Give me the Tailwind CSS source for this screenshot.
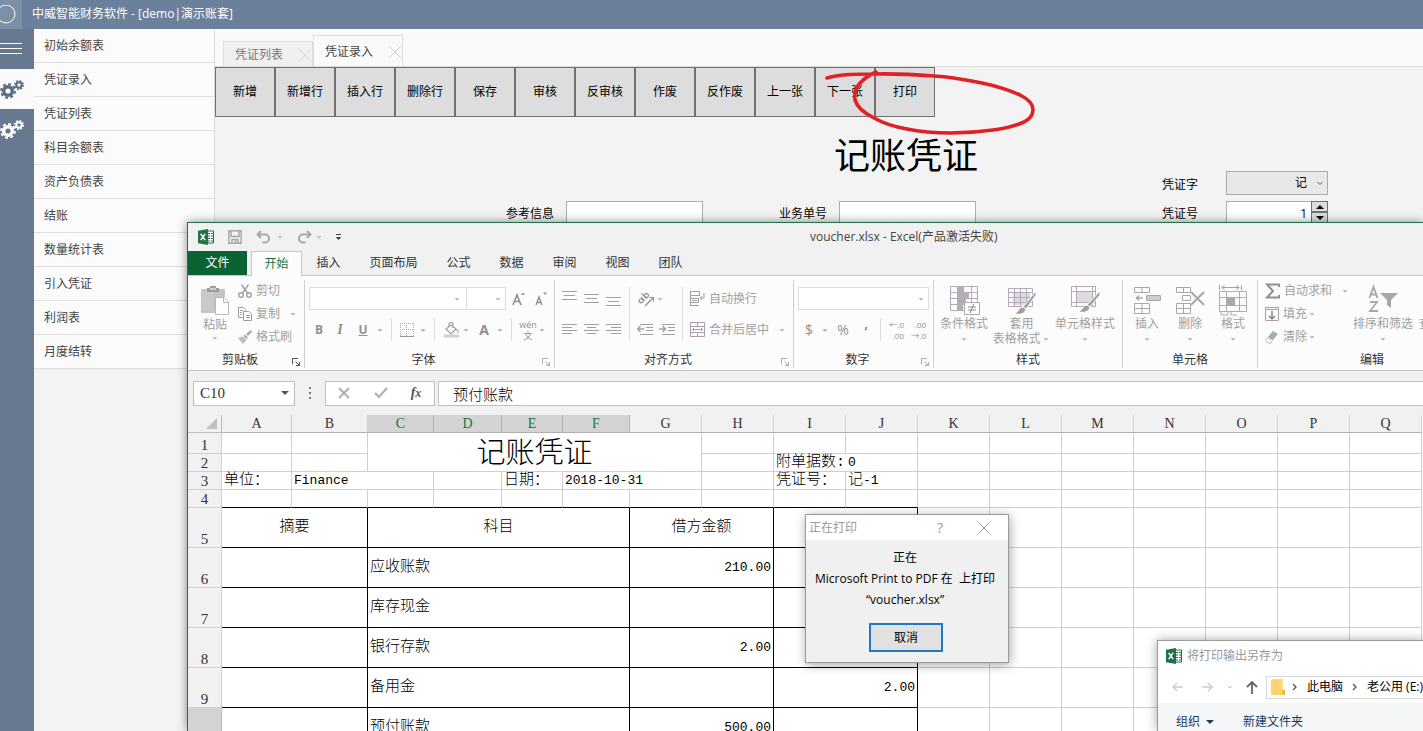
<!DOCTYPE html>
<html lang="zh-CN">
<head>
<meta charset="utf-8">
<title>中威智能财务软件</title>
<script src="https://cdn.jsdelivr.net/npm/@tailwindcss/browser@4"></script>
</head>
<body class="relative h-screen overflow-hidden bg-[#f3f3f3] font-['Open_Sans','Noto_Sans_CJK_SC',sans-serif] text-xs leading-4 text-black">

<svg class="hidden" aria-hidden="true">
  <symbol id="caret" viewBox="0 0 10 10"><path d="M2.500 4h5L5 7z" fill="currentColor" opacity=".65"/></symbol>
  <symbol id="launch" viewBox="0 0 9 9"><path d="M.5 7V.5H7M4 4l4 4M8.500 4.500v4h-4" fill="none" stroke="currentColor"/></symbol>
  <symbol id="gears" viewBox="0 0 26 22">
    <g fill="none" stroke="currentColor">
      <circle cx="8" cy="13" r="4.300" stroke-width="3.400"/>
      <circle cx="8" cy="13" r="6.800" stroke-width="2.200" stroke-dasharray="2.800 2.540"/>
      <circle cx="19" cy="7" r="2.700" stroke-width="2"/>
      <circle cx="19" cy="7" r="4.200" stroke-width="1.600" stroke-dasharray="1.800 1.500"/>
    </g>
  </symbol>
  <symbol id="excel" viewBox="0 0 16 16">
    <path d="M9 2h6.500v12H9z" fill="#fff" stroke="#217346"/>
    <path d="M10 4.500h2M13 4.500h2M10 7h2M13 7h2M10 9.500h2M13 9.500h2M10 12h2M13 12h2" stroke="#217346" stroke-width="1.200"/>
    <path d="M0 1.700 10 0v16L0 14.300z" fill="#217346"/>
    <path d="m2.700 4.800 4.400 6.400M7.100 4.800l-4.400 6.400" stroke="#fff" stroke-width="1.500"/>
  </symbol>
</svg>

<div class="flex h-full flex-col">
  <!-- application title bar -->
  <header class="flex h-[29px] shrink-0 items-center bg-[#6b819b] text-white">
    <div class="flex h-full w-[22px] items-center bg-[#7c90a8]">
      <svg class="h-5 w-4" viewBox="0 0 16 20" fill="none" stroke="#fff"><circle cx="6" cy="9" r="9"/></svg>
    </div>
    <h1 class="ml-2.5 pb-px">中威智能财务软件 - [demo|演示账套]</h1>
  </header>

  <div class="flex min-h-0 flex-1">
    <!-- icon rail -->
    <nav class="flex w-[34px] shrink-0 flex-col bg-[#67788f] text-white" aria-label="模块">
      <button class="flex h-10 items-center" aria-label="菜单">
        <svg class="h-3 w-[22px]" viewBox="0 0 22 12" stroke="#fff"><path d="M0 .5h22M0 5.500h22M0 10.500h22"/></svg>
      </button>
      <button class="flex h-10 items-center bg-[#fafafa] text-[#5b6d84]" aria-label="财务"><svg class="h-[22px] w-[26px]"><use href="#gears"/></svg></button>
      <button class="flex h-10 items-center" aria-label="设置"><svg class="h-[22px] w-[26px]"><use href="#gears"/></svg></button>
    </nav>

    <!-- side menu -->
    <aside class="w-[181px] shrink-0 border-r border-[#dcdcdc]">
      <ul class="text-[#444]">
        <li class="h-[34px] border-b border-[#dedede] bg-[#fbfbfb]"><a href="#" class="flex h-full items-center px-2.5">初始余额表</a></li>
        <li class="h-[34px] border-b border-[#dedede] bg-[#fbfbfb]"><a href="#" class="flex h-full items-center px-2.5">凭证录入</a></li>
        <li class="h-[34px] border-b border-[#dedede] bg-[#fbfbfb]"><a href="#" class="flex h-full items-center px-2.5">凭证列表</a></li>
        <li class="h-[34px] border-b border-[#dedede] bg-[#fbfbfb]"><a href="#" class="flex h-full items-center px-2.5">科目余额表</a></li>
        <li class="h-[34px] border-b border-[#dedede] bg-[#fbfbfb]"><a href="#" class="flex h-full items-center px-2.5">资产负债表</a></li>
        <li class="h-[34px] border-b border-[#dedede] bg-[#fbfbfb]"><a href="#" class="flex h-full items-center px-2.5">结账</a></li>
        <li class="h-[34px] border-b border-[#dedede] bg-[#fbfbfb]"><a href="#" class="flex h-full items-center px-2.5">数量统计表</a></li>
        <li class="h-[34px] border-b border-[#dedede] bg-[#fbfbfb]"><a href="#" class="flex h-full items-center px-2.5">引入凭证</a></li>
        <li class="h-[34px] border-b border-[#dedede] bg-[#fbfbfb]"><a href="#" class="flex h-full items-center px-2.5">利润表</a></li>
        <li class="h-[34px] border-b border-[#dedede] bg-[#fbfbfb]"><a href="#" class="flex h-full items-center px-2.5">月度结转</a></li>
      </ul>
    </aside>

    <main class="min-w-0 flex-1">
      <div class="flex h-[38px] items-end border-b border-[#dcdcdc] bg-[#fafafa] pl-2">
        <button class="flex h-[25px] w-[90px] items-center justify-between border border-b-0 border-[#dcdcdc] bg-[#f0f0f0] pl-[11px] pt-0.5 text-[#777]">凭证列表
          <svg class="size-3.5" viewBox="0 0 14 14" stroke="#dadada"><path d="m1 1 12 12M13 1 1 13"/></svg></button>
        <button class="flex h-[31px] w-[90px] items-center justify-between border border-b-0 border-[#dcdcdc] bg-[#fafafa] pl-[11px] pt-0.5 text-[#444]">凭证录入
          <svg class="size-3.5" viewBox="0 0 14 14" stroke="#cfcfcf"><path d="m1 1 12 12M13 1 1 13"/></svg></button>
      </div>

      <div class="flex">
        <button class="h-[50px] w-[60px] border border-[#707070] bg-[#ddd]">新增</button>
        <button class="h-[50px] w-[60px] border border-[#707070] bg-[#ddd]">新增行</button>
        <button class="h-[50px] w-[60px] border border-[#707070] bg-[#ddd]">插入行</button>
        <button class="h-[50px] w-[60px] border border-[#707070] bg-[#ddd]">删除行</button>
        <button class="h-[50px] w-[60px] border border-[#707070] bg-[#ddd]">保存</button>
        <button class="h-[50px] w-[60px] border border-[#707070] bg-[#ddd]">审核</button>
        <button class="h-[50px] w-[60px] border border-[#707070] bg-[#ddd]">反审核</button>
        <button class="h-[50px] w-[60px] border border-[#707070] bg-[#ddd]">作废</button>
        <button class="h-[50px] w-[60px] border border-[#707070] bg-[#ddd]">反作废</button>
        <button class="h-[50px] w-[60px] border border-[#707070] bg-[#ddd]">上一张</button>
        <button class="h-[50px] w-[60px] border border-[#707070] bg-[#ddd]">下一张</button>
        <button class="h-[50px] w-[60px] border border-[#707070] bg-[#ddd]">打印</button>
      </div>

      <form class="pt-5">
        <h2 class="-mb-1 pl-[619px] text-4xl leading-[38px]">记账凭证</h2>
        <div class="flex items-center pl-[947px]">
          <label for="word" class="w-16 pt-1">凭证字</label>
          <div class="relative">
            <select id="word" class="h-6 w-[102px] appearance-none border border-[#acacac] bg-[#e8e8e8] pr-5 text-right [text-align-last:right]"><option>记</option></select>
            <svg class="pointer-events-none absolute right-1 top-2 size-2" viewBox="0 0 8 8" fill="none" stroke="#606060"><path d="m1.500 3 2.500 2.500L6.500 3"/></svg>
          </div>
        </div>
        <div class="flex items-center pt-1.5 pl-[291px]">
          <label for="ref" class="w-[60px] pt-1">参考信息</label>
          <input id="ref" class="h-[22px] w-[137px] border border-[#abadb3] bg-white px-1">
          <label for="biz" class="ml-[76px] w-[60px] pt-1">业务单号</label>
          <input id="biz" class="h-[22px] w-[137px] border border-[#abadb3] bg-white px-1">
          <label for="no" class="ml-[186px] w-16 pt-1">凭证号</label>
          <input id="no" value="1" class="h-[22px] w-[85px] border border-r-0 border-[#abadb3] bg-white px-1 pt-0.5 text-right">
          <div class="flex w-[17px] flex-col bg-[#ddd]">
            <button type="button" class="flex h-[11px] items-center justify-center border border-[#707070]" aria-label="增加"><svg class="h-1 w-2" viewBox="0 0 8 4"><path d="M0 4 4 0l4 4z"/></svg></button>
            <button type="button" class="flex h-[11px] items-center justify-center border border-[#707070]" aria-label="减少"><svg class="h-1 w-2" viewBox="0 0 8 4"><path d="m0 0 4 4 4-4z"/></svg></button>
          </div>
        </div>
      </form>
    </main>
  </div>
</div>

<!-- hand-drawn mark around the print button -->
<svg class="pointer-events-none absolute left-[815px] top-[60px] h-20 w-[230px]" viewBox="815 60 230 80" fill="none" stroke="#e01f26" stroke-width="3.600" stroke-linecap="round" stroke-linejoin="round">
  <path d="M827 78c14-4 30-4 49-4 20-.5 38 .500 58 2 17 1 33 4 48 7 14 3 27 7 38 12 8 4 13 9 13 14.500 0 5-3 9.500-9 12.500-9 4-19 6.500-31 8-14 2-28 3-42 3-15 0-30-1-44-4-12-2-24-6-33-11-10-5-17-11-19-18-1-5 0-9 2-13 4-6 10-11 19-15"/>
</svg>

<!-- Excel window -->
<section class="absolute inset-0 left-[187px] top-[222px] flex flex-col overflow-hidden border-t border-l border-[#217346] bg-[#f1f1f1] shadow-[0_0_9px_rgba(0,0,0,0.45)]" aria-label="Excel">
  <div class="flex h-7 shrink-0 items-center text-[#a8a8a8]">
    <svg class="ml-2.5 size-4"><use href="#excel"/></svg>
    <button class="ml-3.5" aria-label="保存"><svg class="size-3.5" viewBox="0 0 14 14" fill="none" stroke="currentColor" stroke-width="1.500"><path d="M.8.8h12.400v12.400H.8zM3 1v5.500h8V1M4 13V9.500h6V13M7.500 10v3"/></svg></button>
    <button class="ml-3.5" aria-label="撤消"><svg class="h-4 w-[15px]" viewBox="0 0 15 16" fill="none" stroke="currentColor" stroke-width="2"><path d="M5 2 1.500 5.500 5 9M2 5.500h7a4 4 0 0 1 0 8H6.500"/></svg></button>
    <svg class="ml-1 size-2.5"><use href="#caret"/></svg>
    <button class="ml-3" aria-label="恢复"><svg class="h-4 w-[15px]" viewBox="0 0 15 16" fill="none" stroke="currentColor" stroke-width="2"><path d="m10 2 3.500 3.500L10 9M13 5.500H6a4 4 0 0 0 0 8h2.500"/></svg></button>
    <svg class="ml-0.5 size-2.5"><use href="#caret"/></svg>
    <svg class="ml-2.5 size-2.5 text-[#444]" viewBox="0 0 10 10"><path d="M2 2.500h5M2.500 5.500h4L4.500 7.500z" stroke="currentColor" stroke-width="1" fill="currentColor"/></svg>
    <h2 class="ml-[466px] whitespace-nowrap text-[#444]">voucher.xlsx - Excel(产品激活失败)</h2>
  </div>

  <div class="flex h-[25px] shrink-0 items-stretch border-b border-[#c8c8c8] text-[#333]">
    <button class="w-[59px] bg-[#0a6332] text-white">文件</button>
    <button class="-mb-px ml-1 w-[51px] border border-b-0 border-[#c8c8c8] bg-[#fcfcfc] pb-px text-[#217346]">开始</button>
    <button class="w-[53px]">插入</button>
    <button class="w-[77px]">页面布局</button>
    <button class="w-[53px]">公式</button>
    <button class="w-[53px]">数据</button>
    <button class="w-[53px]">审阅</button>
    <button class="w-[53px]">视图</button>
    <button class="w-[53px]">团队</button>
  </div>

  <div class="flex h-[95px] shrink-0 border-b border-[#c8c8c8] bg-[#fcfcfc] pt-1 pb-0.5 text-[#a0a0a0]">
    <!-- clipboard -->
    <div class="flex w-[117px] shrink-0 flex-col justify-between border-r border-[#d0d0d0]">
      <div class="flex gap-2 pl-3 pt-[3px]">
        <button class="flex w-[30px] flex-col items-center pt-0.5">
          <svg class="h-8 w-[30px]" viewBox="0 0 30 32"><path d="M1 4h24v8h-9v16H1z" fill="#c4c4c4"/><path d="M3 6v20M6 6v20M9 6v20M12 6v20" stroke="#d6d0d8"/><path d="M7 3h3V1h6v2h3v4H7z" fill="#9c9c9c"/><path d="M10 4h6" stroke="#fff"/><path d="M15.500 12.500H24l4.500 4.500v12.500h-13z" fill="#fff" stroke="#b8b8b8"/><path d="M23.500 12.500v5h5" fill="none" stroke="#b8b8b8"/></svg>
          <span>粘贴</span>
          <svg class="size-2.5"><use href="#caret"/></svg>
        </button>
        <div class="flex flex-col gap-[7px]">
          <button class="flex items-center gap-1"><svg class="size-3.5" viewBox="0 0 14 14" fill="none" stroke="currentColor" stroke-width="1.400"><path d="M3.500.5 9.500 9M10.500.5 4.500 9"/><circle cx="3" cy="11" r="2.300"/><circle cx="11" cy="11" r="2.300"/></svg>剪切</button>
          <button class="flex items-center gap-1"><svg class="size-3.5" viewBox="0 0 14 14" fill="none" stroke="currentColor"><path d="M5 10.500H.5V.5h5l2 2v1M2 3.500h3M2 5.500h2M2 7.500h2M5.500 4.500H11l2.500 2.500v6.500h-8zM8 8.500h4M8 10.500h4"/></svg>复制<svg class="ml-1 size-2.5"><use href="#caret"/></svg></button>
          <button class="flex items-center gap-1"><svg class="size-3.5" viewBox="0 0 14 14"><path d="m13 0 1 2-4 4-2-2zM7 4.500 10 7.500 8.500 9 5.500 6z" fill="#aaa"/><path d="m5 6.500 3.500 3.500L5 14 0 8z" fill="#bbb"/></svg>格式刷</button>
        </div>
      </div>
      <div class="flex items-center pr-1 text-[#333]"><span class="flex-1 text-center">剪贴板</span><button class="pt-1" aria-label="剪贴板选项"><svg class="size-2"><use href="#launch"/></svg></button></div>
    </div>

    <!-- font -->
    <div class="flex w-[250px] shrink-0 flex-col justify-between border-r border-[#d0d0d0]">
      <div class="pl-1 pt-[7px]">
        <div class="flex items-center">
          <button class="flex h-[23px] w-[158px] items-center justify-end border border-[#dcdcdc] bg-white" aria-label="字体"><svg class="mr-1 size-2.5"><use href="#caret"/></svg></button>
          <button class="-ml-px flex h-[23px] w-10 items-center justify-end border border-[#dcdcdc] bg-white" aria-label="字号"><svg class="mr-0.5 size-2.5"><use href="#caret"/></svg></button>
          <button class="ml-1.5" aria-label="增大字号"><svg class="h-4 w-3.5" viewBox="0 0 14 16" fill="none" stroke="#909090"><path d="M1 14 5 4l4 10M2.500 10.500h5" stroke-width="1.600"/><path d="M9 4h4l-2-2.500z" fill="#909090" stroke="none"/></svg></button>
          <button class="ml-2" aria-label="减小字号"><svg class="h-4 w-3.5" viewBox="0 0 14 16" fill="none" stroke="#909090"><path d="m2 14 3-8 3 8M3 11.500h4" stroke-width="1.400"/><path d="M9 1.500h4L11 4z" fill="#909090" stroke="none"/></svg></button>
        </div>
        <div class="mt-2 flex h-[23px] items-center text-sm text-[#909090]">
          <button class="w-5 text-xs font-bold">B</button>
          <button class="w-[22px] font-['Liberation_Serif',serif] italic font-bold">I</button>
          <button class="w-6 text-xs font-bold underline">U</button>
          <svg class="size-2.5"><use href="#caret"/></svg>
          <span class="ml-1.5 h-full w-px bg-[#dcdcdc]"></span>
          <svg class="ml-2 size-3.5" viewBox="0 0 14 14" fill="none" stroke="#b5a8b8" stroke-dasharray="1 1"><path d="M0 .5h14M0 6.500h14M.5 0v13M6.500 0v13M13.500 0v13"/><path d="M0 13.500h14" stroke-dasharray="none" stroke="#999"/></svg>
          <svg class="ml-1 size-2.5"><use href="#caret"/></svg>
          <span class="ml-1.5 h-full w-px bg-[#dcdcdc]"></span>
          <svg class="ml-2 h-4 w-[18px]" viewBox="0 0 18 16" fill="none" stroke="#a0a0a0" stroke-width="1.200"><path d="M6 4V2.500a2 2 0 0 1 4 0V6M3 7l5-4 5 4-5 5zM13 7c2 1 2.500 2 2 4"/><path d="M1 14h15" stroke="#d0d0d0" stroke-width="3"/></svg>
          <svg class="size-2.5"><use href="#caret"/></svg>
          <button class="ml-[5px] w-4 font-bold">A</button>
          <svg class="ml-[3px] size-2.5"><use href="#caret"/></svg>
          <span class="ml-1.5 h-full w-px bg-[#dcdcdc]"></span>
          <button class="ml-[7px] flex w-[18px] flex-col items-center text-[9px] leading-[11px]"><span>wén</span><span>文</span></button>
          <svg class="size-2.5"><use href="#caret"/></svg>
        </div>
      </div>
      <div class="flex items-center pr-1"><span class="flex-1 text-center text-[#333]">字体</span><button class="pt-1" aria-label="字体选项"><svg class="size-2"><use href="#launch"/></svg></button></div>
    </div>

    <!-- alignment -->
    <div class="flex w-[239px] shrink-0 flex-col justify-between border-r border-[#d0d0d0]">
      <div class="flex pl-[7px] pt-[7px]">
        <div class="grid grid-cols-3 gap-x-[7px] gap-y-2">
          <button class="flex h-[23px] items-center" aria-label="顶端对齐"><svg class="size-[15px]" viewBox="0 0 15 15" stroke="currentColor"><path d="M0 .5h15M2 4.500h11M0 8.500h15"/></svg></button>
          <button class="flex h-[23px] items-center" aria-label="垂直居中"><svg class="size-[15px]" viewBox="0 0 15 15" stroke="currentColor"><path d="M0 3.500h15M2 7.500h11M0 11.500h15"/></svg></button>
          <button class="flex h-[23px] items-center" aria-label="底端对齐"><svg class="size-[15px]" viewBox="0 0 15 15" stroke="currentColor"><path d="M0 6.500h15M2 10.500h11M0 14.500h15"/></svg></button>
          <button class="flex h-[23px] items-center" aria-label="左对齐"><svg class="size-[15px]" viewBox="0 0 15 15" stroke="currentColor"><path d="M0 2.500h15M0 5.500h10M0 8.500h15M0 11.500h10"/></svg></button>
          <button class="flex h-[23px] items-center" aria-label="居中"><svg class="size-[15px]" viewBox="0 0 15 15" stroke="currentColor"><path d="M0 2.500h15M3 5.500h9M0 8.500h15M3 11.500h9"/></svg></button>
          <button class="flex h-[23px] items-center" aria-label="右对齐"><svg class="size-[15px]" viewBox="0 0 15 15" stroke="currentColor"><path d="M0 2.500h15M5 5.500h10M0 8.500h15M5 11.500h10"/></svg></button>
        </div>
        <span class="ml-2 w-px bg-[#dcdcdc]"></span>
        <div class="ml-[7px] flex w-[38px] flex-col gap-2">
          <div class="flex h-[23px] items-center">
            <svg class="h-[18px] w-[18px]" viewBox="0 0 18 18" fill="none" stroke="#909090" stroke-width="1.200"><g transform="rotate(-45 7 8)"><circle cx="3" cy="8" r="2"/><path d="M5.500 5.500v5M8.500 3v7.500"/><circle cx="10.500" cy="8" r="2"/></g><path d="m8 16 8-8M12.500 7.500H16.500V11.500"/></svg>
            <svg class="size-2.5"><use href="#caret"/></svg>
          </div>
          <div class="flex h-[23px] items-center gap-1.5">
            <svg class="h-[15px] w-4" viewBox="0 0 16 15" fill="none" stroke="currentColor"><path d="M3 2.500h13M9 5.500h7M9 8.500h7M3 12.500h13"/><path d="M0 7h7M3.500 4 .5 7l3 3" stroke-width="1.500"/></svg>
            <svg class="h-[15px] w-4" viewBox="0 0 16 15" fill="none" stroke="currentColor"><path d="M3 2.500h13M9 5.500h7M9 8.500h7M3 12.500h13"/><path d="M0 7h7M3.500 4l3 3-3 3" stroke-width="1.500"/></svg>
          </div>
        </div>
        <span class="ml-[7px] w-px bg-[#dcdcdc]"></span>
        <div class="ml-[7px] flex flex-col gap-2">
          <button class="flex h-[23px] items-center gap-1"><svg class="size-[15px]" viewBox="0 0 15 15" fill="none" stroke="currentColor"><path d="M.5.5h9v4h-9zM1 4.500h9M.5 7.500h8v4h-8zM2 9.500h5M1 14.500h8M.5 0v15M14 2v5h-4M12 5l-2 2 2 2"/></svg>自动换行</button>
          <button class="flex h-[23px] items-center gap-1"><svg class="size-[15px]" viewBox="0 0 15 15" fill="none" stroke="#a99fae"><path d="M.5.5h14v14H.5zM.5 4.500h14M.5 10.500h14M7.500 .5v4M7.500 10.500v4M2 7.500h11M4 6 2.500 7.500 4 9M11 6l1.500 1.500L11 9"/></svg>合并后居中<svg class="ml-1 size-2.5"><use href="#caret"/></svg></button>
        </div>
      </div>
      <div class="flex items-center pr-1"><span class="flex-1 text-center text-[#333]">对齐方式</span><button class="pt-1" aria-label="对齐选项"><svg class="size-2"><use href="#launch"/></svg></button></div>
    </div>

    <!-- number -->
    <div class="flex w-[140px] shrink-0 flex-col justify-between border-r border-[#d0d0d0]">
      <div class="pl-1 pt-[7px]">
        <button class="flex h-[23px] w-[131px] items-center justify-end border border-[#dcdcdc] bg-white" aria-label="数字格式"><svg class="mr-0.5 size-2.5"><use href="#caret"/></svg></button>
        <div class="mt-2 flex h-[23px] items-center text-sm text-[#909090]">
          <button class="w-[22px]">$</button>
          <svg class="size-2.5"><use href="#caret"/></svg>
          <button class="ml-1 w-[18px]">%</button>
          <button class="ml-1 w-5 pt-1 font-bold">’</button>
          <span class="ml-1 h-full w-px bg-[#dcdcdc]"></span>
          <button class="ml-[7px] w-4 text-right text-[8px] leading-[11px]">←.0<br>.00</button>
          <button class="ml-1.5 w-4 text-right text-[8px] leading-[11px]">.00<br>→.0</button>
        </div>
      </div>
      <div class="flex items-center pr-1"><span class="flex-1 text-center text-[#333]">数字</span><button class="pt-1" aria-label="数字选项"><svg class="size-2"><use href="#launch"/></svg></button></div>
    </div>

    <!-- styles -->
    <div class="flex w-[189px] shrink-0 flex-col justify-between border-r border-[#d0d0d0]">
      <div class="flex justify-between pl-1.5 pr-[7px] pt-1">
        <button class="flex flex-col items-center">
          <svg class="size-8" viewBox="0 0 32 32" fill="none" stroke="#b5a8b8"><path d="M2.500 2.500h27v24h-27zM9.500 2.500v24M23.500 2.500v24M2.500 8.500h27M2.500 14.500h27M2.500 20.500h27"/><path d="M10 3h6v5h-6zM10 9h11v5H10zM10 15h8v5h-8zM10 21h5v5h-5z" fill="#b0b0b0" stroke="none"/><path d="M16.500 18.500h15v12h-15z" fill="#fff" stroke="#aaa"/><path d="M20 23h8M20 26h8M26 20l-4 9" stroke="#888"/></svg>
          <span>条件格式</span><svg class="mt-0.5 size-2.5"><use href="#caret"/></svg>
        </button>
        <button class="flex flex-col items-center">
          <svg class="size-8" viewBox="0 0 32 32" fill="none" stroke="#b5a8b8"><path d="M8 8h17v13H8z" fill="#dcdcdc" stroke="none"/><path d="M3.500 4.500h24v18h-24zM9.500 4.500v18M15.500 4.500v18M21.500 4.500v18M3.500 8.500h24M3.500 13.500h24M3.500 18.500h24"/><path d="M31 7 18 23l3 2L31 11z" fill="#a0a0a0" stroke="#fff"/><path d="M18 23c-4 0-4 4-8 7 5 1 10 0 11-5z" fill="#a0a0a0" stroke="#fff"/></svg>
          <span class="-mb-px">套用</span><span class="-ml-2.5 flex items-center pl-2.5">表格格式<svg class="size-2.5"><use href="#caret"/></svg></span>
        </button>
        <button class="flex flex-col items-center">
          <svg class="size-8" viewBox="0 0 32 32" fill="none" stroke="#b5a8b8"><path d="M7 7h17v11H7z" fill="#dcdcdc" stroke="none"/><path d="M2.500 2.500h24v20h-24zM7.500 2.500v20M23.500 2.500v20M2.500 7.500h24M2.500 18.500h24"/><path d="M31 7 18 21l3 2L31 11z" fill="#a0a0a0" stroke="#fff"/><path d="M18 21c-4 0-4 4-8 7 5 1 10 0 11-5z" fill="#a0a0a0" stroke="#fff"/></svg>
          <span>单元格样式</span><svg class="mt-0.5 size-2.5"><use href="#caret"/></svg>
        </button>
      </div>
      <span class="text-center text-[#333]">样式</span>
    </div>

    <!-- cells -->
    <div class="flex w-[135px] shrink-0 flex-col justify-between border-r border-[#d0d0d0]">
      <div class="flex justify-between px-2.5 pt-1">
        <button class="flex flex-col items-center">
          <svg class="h-8 w-7" viewBox="0 0 28 32" fill="none" stroke="#a8a8a8"><path d="M1.500 3.500h15v5h-15zM9 3.500v5M13.500 11.500h14v5h-14zM1.500 19.500h15v10h-15zM9 19.500v10M1.500 24.500h15"/><path d="M14 12h13v4H14z" fill="#ccc" stroke="none"/><path d="M3 14h7M6 11.500 3.500 14 6 16.500" stroke-width="1.500"/></svg>
          <span>插入</span><svg class="mt-0.5 size-2.5"><use href="#caret"/></svg>
        </button>
        <button class="flex flex-col items-center">
          <svg class="h-8 w-[30px]" viewBox="0 0 30 32" fill="none" stroke="#a8a8a8"><path d="M1.500 3.500h14v5h-14zM8.500 3.500v5M7.500 11.500h8v5h-8zM1.500 19.500h14v10h-14zM8.500 19.500v10M1.500 24.500h14"/><path d="m16 8 13 13M29 8 16 21" stroke-width="2"/></svg>
          <span>删除</span><svg class="mt-0.5 size-2.5"><use href="#caret"/></svg>
        </button>
        <button class="flex flex-col items-center">
          <svg class="h-8 w-7" viewBox="0 0 28 32" fill="none" stroke="#b5a8b8"><path d="M.5 1v5M22.500 1v5M3 3.500h17M5.500 1 3 3.500 5.500 6M17.500 1 20 3.500 17.500 6" stroke="#a0a0a0"/><path d="M.5 7.500h27v20H.5zM7.500 7.500v20M20.500 7.500v20M.5 13.500h27M.5 21.500h27M2 28v3h7v-3M12 28v3h6"/><path d="M8 14h8v7H8z" fill="#a8a8a8" stroke="none"/></svg>
          <span>格式</span><svg class="mt-0.5 size-2.5"><use href="#caret"/></svg>
        </button>
      </div>
      <span class="text-center text-[#333]">单元格</span>
    </div>

    <!-- editing -->
    <div class="flex w-[228px] shrink-0 flex-col justify-between">
      <div class="flex pl-[7px] pt-[3px]">
        <div class="flex w-[88px] flex-col gap-[7px]">
          <button class="flex items-center gap-1"><svg class="h-4 w-[15px]" viewBox="0 0 15 16" fill="none" stroke="#909090" stroke-width="2"><path d="M14 4V1.500H2L8 8l-6 6.500h12V12"/></svg>自动求和<svg class="ml-1 size-2.5"><use href="#caret"/></svg></button>
          <button class="flex items-center gap-1"><svg class="size-3.5" viewBox="0 0 14 14" fill="none" stroke="#a99fae"><path d="M.5.5h13v13H.5zM.5 2.500h13"/><path d="M7 4v8M4 9l3 3 3-3" stroke="#888" stroke-width="1.500"/></svg>填充<svg class="-ml-1 size-2.5"><use href="#caret"/></svg></button>
          <button class="flex items-center gap-1"><svg class="size-3.5" viewBox="0 0 14 14"><path d="m8 1 5 3-5 6-5-3z" fill="#aaa"/><path d="m2.500 7.500 5 3L6 13H3L.5 10.500z" fill="none" stroke="#bbb"/></svg>清除<svg class="-ml-1 size-2.5"><use href="#caret"/></svg></button>
        </div>
        <button class="flex shrink-0 flex-col items-center pt-px">
          <svg class="h-8 w-[30px]" viewBox="0 0 30 32" fill="none" stroke="#a8a8a8" stroke-width="1.800"><path d="m1.500 14 4-11 4 11M3 10.500h5M2 18h7L2 27h8"/><path d="M12 9h18l-7 7v8l-4-3v-5z" fill="#a8a8a8" stroke="none"/></svg>
          <span>排序和筛选</span><svg class="mt-0.5 size-2.5"><use href="#caret"/></svg>
        </button>
        <button class="ml-1.5 flex shrink-0 flex-col items-center pt-[33px]"><span>查找和选择</span></button>
      </div>
      <span class="text-center text-[#333]">编辑</span>
    </div>
  </div>

  <!-- formula bar -->
  <div class="flex h-11 shrink-0 items-center pl-[5px]">
    <div class="relative">
      <input aria-label="名称框" value="C10" class="block h-[25px] w-[102px] border border-[#c0c0c0] bg-white px-1.5 font-['Liberation_Serif',serif] text-[15px] text-[#333]">
      <svg class="absolute right-1.5 top-2 h-2 w-2" viewBox="0 0 8 8"><path d="M0 2h8L4 6z" fill="#555"/></svg>
    </div>
    <svg class="ml-[13px] h-3 w-1" viewBox="0 0 4 12" fill="#777"><path d="M1 0h2v2H1zM1 5h2v2H1zM1 10h2v2H1z"/></svg>
    <div class="ml-[13px] flex h-[25px] w-[110px] items-center border border-[#c0c0c0] bg-white">
      <button class="ml-3" aria-label="取消输入"><svg class="size-3" viewBox="0 0 12 12" stroke="#b0b0b0" stroke-width="2"><path d="m1 1 10 10M11 1 1 11"/></svg></button>
      <button class="ml-6" aria-label="确认输入"><svg class="h-3 w-3.5" viewBox="0 0 14 12" fill="none" stroke="#b0b0b0" stroke-width="2.200"><path d="m1 6 4 4 8-9"/></svg></button>
      <button class="ml-4 w-6 font-['Liberation_Serif',serif] text-sm font-bold italic text-[#555]" aria-label="插入函数"><i>f</i><span class="text-xs">x</span></button>
    </div>
    <input aria-label="编辑栏" value="预付账款" class="ml-[3px] h-[25px] min-w-0 flex-1 border border-r-0 border-[#c0c0c0] bg-white px-3.5 text-[15px] font-light">
  </div>

  <!-- worksheet -->
  <div class="min-h-0 flex-1 overflow-hidden bg-white">
    <table class="w-[1234px] table-fixed border-separate border-spacing-0 whitespace-nowrap font-['Liberation_Mono','Noto_Sans_CJK_SC',monospace] text-[13px] leading-[17px] text-black">
      <colgroup id="cols"></colgroup>
      <thead><tr id="heads"></tr></thead>
      <tbody id="cells"></tbody>
    </table>
  </div>
</section>

<!-- print progress dialog -->
<div role="dialog" aria-label="正在打印" class="absolute left-[805px] top-[514px] w-[204px] border border-[#9a9a9a] bg-[#f0f0f0] shadow-[1px_2px_10px_rgba(0,0,0,0.35)]">
  <div class="flex h-[25px] items-center bg-white pl-[3px] text-[#999]">
    <span class="flex-1">正在打印</span>
    <button class="w-6 text-sm" aria-label="帮助">?</button>
    <button class="ml-[26px] mr-[18px]" aria-label="关闭"><svg class="size-3" viewBox="0 0 12 12" stroke="#999"><path d="m.5.5 11 11M11.500.5l-11 11"/></svg></button>
  </div>
  <p class="whitespace-pre pt-[7px] pr-1 text-center leading-[21px]">正在
Microsoft Print to PDF 在  上打印
“voucher.xlsx”</p>
  <div class="flex justify-center pt-[13px] pb-2.5 pr-0.5"><button class="h-[29px] w-[74px] border-2 border-[#1f78c0] bg-[#e1e1e1]">取消</button></div>
</div>

<!-- save-as dialog -->
<div role="dialog" aria-label="将打印输出另存为" class="absolute right-0 bottom-0 left-[1157px] top-[640px] flex flex-col overflow-hidden border-t border-l border-[#9a9a9a] bg-white whitespace-nowrap shadow-[0_0_10px_rgba(0,0,0,0.35)]">
  <div class="flex h-[30px] shrink-0 items-center gap-[5px] pl-2 text-[#999]"><svg class="size-4"><use href="#excel"/></svg>将打印输出另存为</div>
  <div class="flex h-8 shrink-0 items-center">
    <button class="ml-3.5" aria-label="后退"><svg class="h-2.5 w-[11px]" viewBox="0 0 11 10" fill="none" stroke="#ccc" stroke-width="1.500"><path d="M5 1 1 5l4 4M1 5h10"/></svg></button>
    <button class="ml-[19px]" aria-label="前进"><svg class="h-2.5 w-[11px]" viewBox="0 0 11 10" fill="none" stroke="#ccc" stroke-width="1.500"><path d="m6 1 4 4-4 4M10 5H0"/></svg></button>
    <svg class="ml-[13px] size-2" viewBox="0 0 8 8" fill="none" stroke="#bbb"><path d="m2 3 2 2 2-2"/></svg>
    <button class="ml-3" aria-label="向上"><svg class="h-[13px] w-3" viewBox="0 0 12 13" fill="none" stroke="#666" stroke-width="1.800"><path d="m1 6 5-5 5 5M6 1v12"/></svg></button>
    <div class="ml-2 flex h-[23px] flex-1 items-center border border-r-0 border-[#d9d9d9] pl-1">
      <svg class="h-4 w-3.5" viewBox="0 0 14 16"><path d="M1 0h11v11l2 1v4H1z" fill="#ffe08a"/><path d="M0 1h10v15H0z" fill="#ffd56b"/><path d="M11 11h3v5h-3z" fill="#f0b93a"/></svg>
      <svg class="ml-1.5 size-2" viewBox="0 0 8 8" fill="none" stroke="#555" stroke-width="1.300"><path d="m2 1 3 3-3 3"/></svg>
      <span class="ml-2">此电脑</span>
      <svg class="ml-2 size-2" viewBox="0 0 8 8" fill="none" stroke="#555" stroke-width="1.300"><path d="m2 1 3 3-3 3"/></svg>
      <span class="ml-2">老公用 (E:)</span>
    </div>
  </div>
  <div class="flex flex-1 items-center bg-[#f5f6f7] text-[#1e395b]">
    <button class="ml-[18px] mt-2.5 flex items-center gap-1.5">组织<svg class="size-2" viewBox="0 0 8 8"><path d="M0 2h8L4 6z" fill="#1e395b"/></svg></button>
    <button class="ml-[29px] mt-2.5">新建文件夹</button>
  </div>
</div>

<script>
  // Column name and width of the worksheet
  const columns = [['A', 70], ['B', 76], ['C', 66], ['D', 68], ['E', 61], ['F', 67], ['G', 72], ['H', 72], ['I', 72], ['J', 72],
    ['K', 72], ['L', 72], ['M', 72], ['N', 72], ['O', 72], ['P', 72], ['Q', 72]];
  const selected = 'CDEF';
  const grid = 'border-r border-b border-[#cfcfcf] p-0 px-0.5';
  const open = 'border-b border-[#cfcfcf] p-0 px-0.5';
  const last = 'border-r border-b border-r-[#cfcfcf] border-b-black p-0';
  const box = 'border-r border-b border-black p-0 px-0.5';
  const name15 = ' text-[15px] font-light';
  const td = (text, cls, attrs = '') => `<td class="${cls}" ${attrs}>${text}</td>`;
  const fill = (n, cls) => Array(n).fill(td('', cls)).join('');
  const line = (size, number, body, on) => `<tr class="${size}"><th scope="row" class="${on
    ? 'border-r border-b border-[#bdbdbd] bg-[#d3d3d3] p-0'
    : 'border-r border-b border-[#cfcfcf] bg-[#f1f1f1] p-0 align-bottom font-[\'Liberation_Serif\',serif] text-[15px] leading-[15px] font-normal text-[#333]'}">${number}</th>${body}</tr>`;
  const entry = (number, name, debit, credit, on) => line('h-10', number,
    td('', box, 'colspan="2"') + td(name, box + name15, 'colspan="4"') +
    td(debit, box + ' text-right', 'colspan="2"') + td(credit, box + ' text-right', 'colspan="2"') + fill(7, grid), on);

  document.getElementById('cols').innerHTML = '<col style="width:34px">' + columns.map(c => `<col style="width:${c[1]}px">`).join('');
  document.getElementById('heads').innerHTML =
    '<td class="h-[18px] border-r border-b border-[#bdbdbd] bg-[#f1f1f1] p-0"><svg class="ml-auto mr-1 h-[11px] w-[11px]" viewBox="0 0 11 11"><path d="M11 0v11H0z" fill="#c0c0c0"/></svg></td>' +
    columns.map(c => `<th scope="col" class="${selected.includes(c[0])
      ? 'h-[18px] border-r border-b border-[#b0b0b0] bg-[#d3d3d3] p-0 font-[\'Liberation_Serif\',serif] text-sm leading-[17px] font-normal text-[#217346]'
      : 'h-[18px] border-r border-b border-r-[#cfcfcf] border-b-[#b0b0b0] bg-[#f1f1f1] p-0 font-[\'Liberation_Serif\',serif] text-sm leading-[17px] font-normal text-[#333]'}">${c[0]}</th>`).join('');
  document.getElementById('cells').innerHTML =
    line('h-[21px]', 1, fill(2, grid) + td('记账凭证', 'border-r border-b border-[#cfcfcf] p-0 pt-1.5 text-center text-[29px] font-light', 'colspan="5" rowspan="2"') + fill(10, grid)) +
    line('h-[18px]', 2, fill(2, grid) + td('', grid) + td('附单据数:', open + name15) + td('0', grid) + fill(7, grid)) +
    line('h-[18px]', 3, td('单位：', grid + name15) + td('Finance', open) + fill(2, grid) + td('日期：', grid + name15) +
      td('2018-10-31', open) + fill(2, grid) + td('凭证号：', grid + name15) + td('<span class="text-[15px] font-light">记</span>-1', grid) + fill(7, grid)) +
    line('h-[18px]', 4, fill(10, last) + fill(7, grid)) +
    line('h-10', 5, td('摘要', box + ' text-center' + name15, 'colspan="2"') + td('科目', box + ' text-center' + name15, 'colspan="4"') +
      td('借方金额', box + ' text-center' + name15, 'colspan="2"') + td('', box, 'colspan="2"') + fill(7, grid)) +
    entry(6, '应收账款', '210.00', '') + entry(7, '库存现金', '', '') + entry(8, '银行存款', '2.00', '') +
    entry(9, '备用金', '', '2.00') + entry('', '预付账款', '500.00', '', true);
</script>
</body>
</html>
